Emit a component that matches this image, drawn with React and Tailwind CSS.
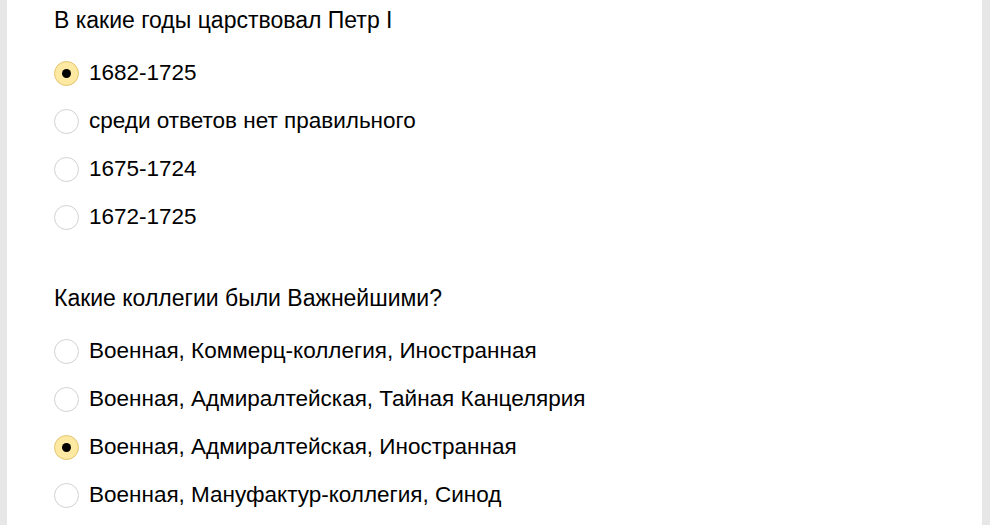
import React from 'react';

const questions = [
  {
    title: 'В какие годы царствовал Петр I',
    options: ['1682-1725', 'среди ответов нет правильного', '1675-1724', '1672-1725'],
    selected: 0,
  },
  {
    title: 'Какие коллегии были Важнейшими?',
    options: [
      'Военная, Коммерц-коллегия, Иностранная',
      'Военная, Адмиралтейская, Тайная Канцелярия',
      'Военная, Адмиралтейская, Иностранная',
      'Военная, Мануфактур-коллегия, Синод',
    ],
    selected: 2,
  },
];

// Radio circle: yellow when checked
const Radio = ({ checked }) => (
  <span
    className={`flex h-[25px] w-[25px] shrink-0 items-center justify-center rounded-full border ${
      checked ? 'border-[#e3c570] bg-[#fde9a2]' : 'border-[#d2d2d2] bg-white'
    }`}
  >
    {checked && <span className="h-[9px] w-[9px] rounded-full bg-black" />}
  </span>
);

const Question = ({ q, first }) => (
  <div className={first ? 'pt-[8px]' : 'pt-[45px]'}>
    <div className="text-[23px] leading-[24px] text-black">{q.title}</div>
    <ul className="mt-[17px]">
      {q.options.map((opt, i) => (
        <li key={opt} className="flex h-12 items-center gap-[10px]">
          <Radio checked={i === q.selected} />
          <span className="text-[22.5px] leading-[24px] text-black">{opt}</span>
        </li>
      ))}
    </ul>
  </div>
);

export default function App() {
  return (
    <div
      className="flex h-[525px] w-full overflow-hidden bg-[#e7e7e7]"
      style={{ fontFamily: '"Liberation Sans", Arial, sans-serif' }}
    >
      <div className="ml-[7px] mr-[8px] flex-1 bg-white pl-[47px]">
        {questions.map((q, idx) => (
          <Question key={q.title} q={q} first={idx === 0} />
        ))}
      </div>
    </div>
  );
}
